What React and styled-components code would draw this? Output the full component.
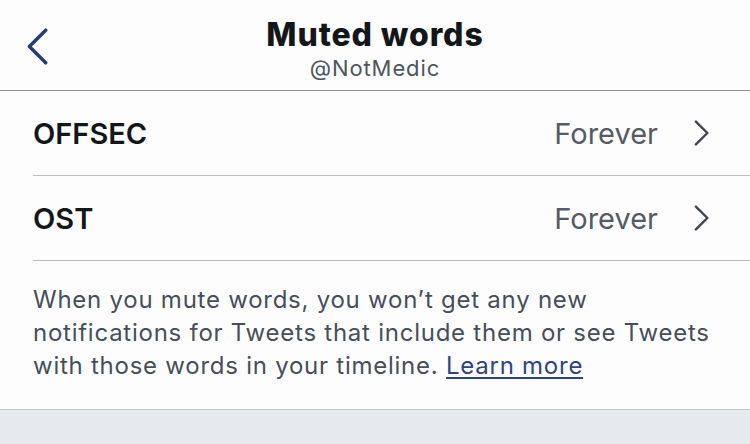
import React from 'react';
import styled, { createGlobalStyle } from 'styled-components';

const GlobalStyle = createGlobalStyle`
    html, body {
        margin: 0;
        padding: 0;
        background: #e6e9ed;
    }
    body {
        font-family: Inter, "Noto Sans", sans-serif;
        -webkit-font-smoothing: antialiased;
    }
`;

const Page = styled.div`
    width: 750px;
    height: 444px;
    background: #e6e9ed;
    overflow: hidden;
`;

const Sheet = styled.div`
    background: #fdfdfd;
    border-bottom: 1px solid #c4c7cc;
`;

const Header = styled.div`
    position: relative;
    height: 91px;
    border-bottom: 1px solid #8e8e8e;
    display: flex;
    flex-direction: column;
    align-items: center;
    padding-top: 17px;
    box-sizing: border-box;
`;

const BackButton = styled.button`
    position: absolute;
    left: 26px;
    top: 28px;
    padding: 0;
    border: none;
    background: none;
    display: flex;
`;

const Title = styled.div`
    font-size: 32px;
    font-weight: 800;
    color: #14171a;
    line-height: 35px;
    letter-spacing: 0.9px;
`;

const Handle = styled.div`
    font-size: 22px;
    color: #4e5561;
    line-height: 26px;
    margin-top: 3px;
    letter-spacing: 0.9px;
`;

const List = styled.div`
    padding-left: 33px;
`;

const Row = styled.div`
    height: 84px;
    display: flex;
    align-items: center;
    border-bottom: 1px solid #bcbfc4;
    padding-right: 40px;
`;

const Word = styled.div`
    flex: 1;
    font-size: 29px;
    font-weight: 600;
    color: #14171a;
`;

const Duration = styled.div`
    font-size: 29px;
    color: #545b67;
    margin-right: 36px;
`;

const Note = styled.p`
    margin: 0;
    padding: 22px 30px 27px 33px;
    font-size: 24px;
    line-height: 33px;
    letter-spacing: 0.75px;
    color: #474e5a;
`;

const LearnMore = styled.a`
    color: #2a4488;
    text-decoration: underline;
    text-underline-offset: 3px;
    text-decoration-thickness: 2px;
`;

const Chevron = ({ dir, color, w, h }) => (
    <svg width={w} height={h} viewBox="0 0 20 34" fill="none">
        <path
            d={dir === 'left' ? 'M18 2 L3 17 L18 32' : 'M2 2 L17 17 L2 32'}
            stroke={color}
            strokeWidth="3.2"
            strokeLinecap="round"
            strokeLinejoin="round"
        />
    </svg>
);

const words = [
    { word: 'OFFSEC', duration: 'Forever' },
    { word: 'OST', duration: 'Forever' },
];

const App = () => (
    <Page>
        <GlobalStyle />
        <Sheet>
            <Header>
                <BackButton>
                    <Chevron dir="left" color="#243d78" w={22} h={37} />
                </BackButton>
                <Title>Muted words</Title>
                <Handle>@NotMedic</Handle>
            </Header>
            <List>
                {words.map(w => (
                    <Row key={w.word}>
                        <Word>{w.word}</Word>
                        <Duration>{w.duration}</Duration>
                        <Chevron dir="right" color="#3c4552" w={16} h={26} />
                    </Row>
                ))}
            </List>
            <Note>
                When you mute words, you won’t get any new notifications for Tweets that
                include them or see Tweets with those words in your timeline.{' '}
                <LearnMore href="#">Learn more</LearnMore>
            </Note>
        </Sheet>
    </Page>
);

export default App;
